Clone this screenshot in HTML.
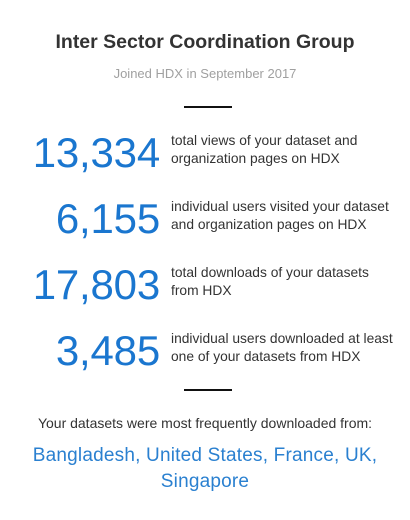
<!DOCTYPE html>
<html><head><style>
body{margin:0;width:410px;height:520px;background:#fff;font-family:"Liberation Sans",sans-serif;position:relative;overflow:hidden}
.a{position:absolute}
.t{left:0;width:410px;text-align:center}
.n{right:250px;color:#1a76cf;font-size:42px;line-height:43px;letter-spacing:-0.2px}
.d{left:171px;font-size:13.8px;line-height:18px;color:#333}
.l{height:2px;background:#111;left:184px;width:48px}
</style></head><body>
<div class="a t" style="top:31px;font-size:19.5px;font-weight:bold;color:#333">Inter Sector Coordination Group</div>
<div class="a t" style="top:66px;font-size:13px;color:#a0a0a0">Joined HDX in September 2017</div>
<div class="a l" style="top:106px"></div>
<div class="a n" style="top:131px">13,334</div>
<div class="a d" style="top:132px">total views of your dataset and<br>organization pages on HDX</div>
<div class="a n" style="top:197px">6,155</div>
<div class="a d" style="top:198px">individual users visited your dataset<br>and organization pages on HDX</div>
<div class="a n" style="top:263px">17,803</div>
<div class="a d" style="top:264px">total downloads of your datasets<br>from HDX</div>
<div class="a n" style="top:329px">3,485</div>
<div class="a d" style="top:330px">individual users downloaded at least<br>one of your datasets from HDX</div>
<div class="a l" style="top:389px"></div>
<div class="a t" style="top:415px;font-size:14px;color:#333">Your datasets were most frequently downloaded from:</div>
<div class="a t" style="top:443px;font-size:19px;line-height:26px;color:#2a80d0;letter-spacing:0.2px">Bangladesh, United States, France, UK,<br>Singapore</div>
</body></html>
